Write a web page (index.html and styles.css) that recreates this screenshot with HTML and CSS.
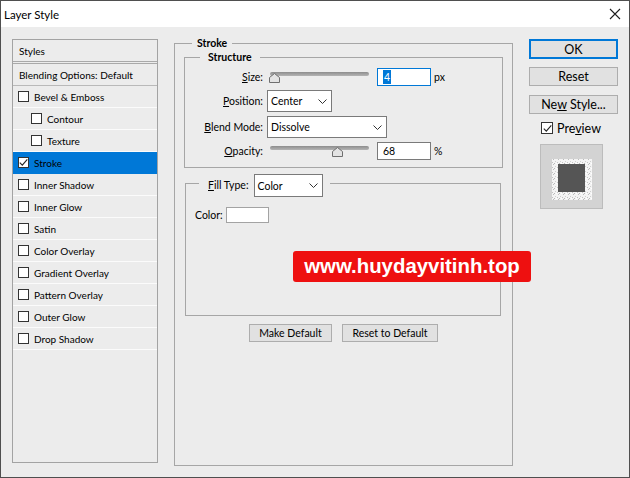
FILE: index.html
```html
<!DOCTYPE html>
<html lang="en">
<head>
<meta charset="utf-8">
<title>Layer Style</title>
<link rel="stylesheet" href="styles.css">
</head>
<body>
<div class="window">
  <div class="titlebar">
    <span class="title">Layer Style</span>
    <svg class="close" width="12" height="12" viewBox="0 0 12 12"><path d="M1 1L11 11M11 1L1 11" stroke="#1e1e1e" stroke-width="1.1" fill="none"/></svg>
  </div>
  <div class="content">
    <div class="styles-panel">
      <div class="row head">Styles</div>
      <div class="row blend">Blending Options: Default</div>
      <div class="row item"><span class="cb"></span>Bevel &amp; Emboss</div>
      <div class="row item sub"><span class="cb"></span>Contour</div>
      <div class="row item sub"><span class="cb"></span>Texture</div>
      <div class="row item selected"><span class="cb checked"><svg width="9" height="9" viewBox="0 0 9 9"><path d="M0.8 4.6L3.3 7.2L8.3 1.3" stroke="#222" stroke-width="1.1" fill="none"/></svg></span>Stroke</div>
      <div class="row item"><span class="cb"></span>Inner Shadow</div>
      <div class="row item"><span class="cb"></span>Inner Glow</div>
      <div class="row item"><span class="cb"></span>Satin</div>
      <div class="row item"><span class="cb"></span>Color Overlay</div>
      <div class="row item"><span class="cb"></span>Gradient Overlay</div>
      <div class="row item"><span class="cb"></span>Pattern Overlay</div>
      <div class="row item"><span class="cb"></span>Outer Glow</div>
      <div class="row item"><span class="cb"></span>Drop Shadow</div>
    </div>

    <fieldset class="group stroke">
      <legend class="legend-stroke">Stroke</legend>
      <fieldset class="group structure">
        <legend class="legend-structure">Structure</legend>
        <div class="form">
          <span class="label"><u>S</u>ize:</span>
          <div class="ctl">
            <div class="slider">
              <div class="track"></div>
              <svg class="thumb" style="left:4.5%" width="11" height="10" viewBox="0 0 11 10"><path d="M5.5 0.5L10.5 4.5V9.5H0.5V4.5Z" fill="#e3e3e3" stroke="#6f6f6f"/></svg>
            </div>
            <div class="input focus"><span class="sel">4</span></div>
            <span class="unit">px</span>
          </div>

          <span class="label"><u>P</u>osition:</span>
          <div class="ctl">
            <div class="select pos"><span>Center</span><svg width="9" height="5" viewBox="0 0 9 5"><path d="M0.5 0.5L4.5 4.5L8.5 0.5" stroke="#333" fill="none"/></svg></div>
          </div>

          <span class="label"><u>B</u>lend Mode:</span>
          <div class="ctl">
            <div class="select mode"><span>Dissolve</span><svg width="9" height="5" viewBox="0 0 9 5"><path d="M0.5 0.5L4.5 4.5L8.5 0.5" stroke="#333" fill="none"/></svg></div>
          </div>

          <span class="label"><u>O</u>pacity:</span>
          <div class="ctl">
            <div class="slider">
              <div class="track"></div>
              <svg class="thumb" style="left:68%" width="11" height="10" viewBox="0 0 11 10"><path d="M5.5 0.5L10.5 4.5V9.5H0.5V4.5Z" fill="#e3e3e3" stroke="#6f6f6f"/></svg>
            </div>
            <div class="input"><span>68</span></div>
            <span class="unit">%</span>
          </div>
        </div>
      </fieldset>

      <fieldset class="group fill">
        <legend class="legend-fill">
          <span class="fill-label"><u>F</u>ill Type:</span>
          <span class="select filltype"><span>Color</span><svg width="9" height="5" viewBox="0 0 9 5"><path d="M0.5 0.5L4.5 4.5L8.5 0.5" stroke="#333" fill="none"/></svg></span>
        </legend>
        <div class="color-row">
          <span>Color:</span>
          <span class="swatch"></span>
        </div>
      </fieldset>

      <div class="defaults">
        <button class="btn small make">Make Default</button>
        <button class="btn small reset-def">Reset to Default</button>
      </div>
    </fieldset>

    <div class="side">
      <button class="btn side-btn ok">OK</button>
      <button class="btn side-btn reset">Reset</button>
      <button class="btn side-btn newstyle">Ne<u>w</u> Style...</button>
      <div class="preview-row">
        <span class="cb checked"><svg width="9" height="9" viewBox="0 0 9 9"><path d="M0.8 4.6L3.3 7.2L8.3 1.3" stroke="#222" stroke-width="1.1" fill="none"/></svg></span>
        <span>Pre<u>v</u>iew</span>
      </div>
      <div class="preview-box">
        <svg width="40" height="41" viewBox="0 0 40 41">
          <defs>
            <pattern id="noise" width="5" height="5" patternUnits="userSpaceOnUse">
              <rect width="5" height="5" fill="#f4f4f4"/>
              <rect x="1" y="0" width="1" height="1" fill="#bdbdbd"/>
              <rect x="3" y="2" width="1" height="1" fill="#d0d0d0"/>
              <rect x="0" y="3" width="1" height="1" fill="#c4c4c4"/>
              <rect x="4" y="4" width="1" height="1" fill="#ffffff"/>
              <rect x="2" y="4" width="1" height="1" fill="#b8b8b8"/>
            </pattern>
          </defs>
          <rect x="0" y="0" width="40" height="41" fill="url(#noise)"/>
          <rect x="6" y="5" width="27" height="28" fill="#555555"/>
        </svg>
      </div>
    </div>
  </div>
  <div class="watermark">www.huydayvitinh.top</div>
</div>
</body>
</html>
```
FILE: styles.css
```css
* { box-sizing: border-box; }
html, body { margin: 0; padding: 0; background: #ececec; }
body {
  font-family: Lato, "Liberation Sans", sans-serif;
  font-size: 10.5px;
  color: #000;
}

.window {
  position: relative;
  width: 630px;
  height: 478px;
  border: 1px solid #4f4f4f;
  background: #ececec;
  overflow: hidden;
}

.titlebar {
  height: 26px;
  background: #fff;
  display: flex;
  align-items: center;
  justify-content: space-between;
  padding: 0 8px 0 3px;
}
.title { font-size: 11.5px; }
.close { display: block; }

.content {
  display: flex;
  align-items: flex-start;
  padding: 0 0 0 11px;
}

/* left styles list */
.styles-panel {
  width: 146px;
  height: 424px;
  margin-top: 12px;
  border: 1px solid #a3a3a3;
  background: #ececec;
  flex: none;
  font-size: 10px;
}
.row {
  height: 22px;
  display: flex;
  align-items: center;
  border-bottom: 1px solid #fbfbfb;
  padding-left: 5px;
  white-space: nowrap;
}
.row.head {
  height: 24px;
  border-bottom: 3px double #a9a9a9;
  padding-left: 6px;
}
.row.blend {
  border-bottom: 1px solid #b9b9b9;
  padding-left: 6px;
}
.row.sub { padding-left: 18px; }
.row.selected { background: #0078d7; border-bottom-color: #0078d7; }

.cb {
  width: 11px;
  height: 11px;
  border: 1px solid #333;
  background: #fff;
  margin-right: 5px;
  flex: none;
  display: flex;
  align-items: center;
  justify-content: center;
}
.cb svg { display: block; }

/* group boxes */
.group {
  margin: 0;
  padding: 0;
  min-width: 0;
  border: 1px solid #a6a6a6;
}
.legend-stroke,
.legend-structure {
  line-height: 14px;
  font-weight: bold;
}

.stroke {
  width: 339px;
  height: 430px;
  margin: 9px 0 0 16px;
  padding: 0 9px;
  flex: none;
}
.legend-stroke { margin-left: 8px; padding: 0 5px; }

.structure { width: 319px; padding: 0; }
.legend-structure { margin-left: 15px; padding: 0 8px; }

.form {
  display: grid;
  grid-template-columns: 78px auto;
  column-gap: 4px;
  row-gap: 4px;
  padding: 4px 0 7px;
  align-items: center;
}
.label { text-align: right; white-space: nowrap; }
.ctl { display: flex; align-items: center; }

.slider {
  position: relative;
  width: 99px;
  height: 18px;
  margin-left: 3px;
}
.track {
  margin-top: 4px;
  height: 4px;
  border-radius: 2px;
  background: linear-gradient(#8d8d8d, #b4b4b4);
}
.thumb {
  position: absolute;
  top: 5px;
  margin-left: -5px;
  display: block;
}

.input {
  width: 54px;
  height: 18px;
  margin-left: 8px;
  border: 1px solid #7a7a7a;
  background: #fff;
  padding-left: 5px;
  display: flex;
  align-items: center;
}
.input.focus { border-color: #0078d7; }
.sel { background: #0078d7; color: #fff; line-height: 14px; padding: 0 1px; }
.unit { margin-left: 3px; }

.select {
  height: 22px;
  border: 1px solid #7a7a7a;
  background: #fff;
  display: flex;
  align-items: center;
  justify-content: space-between;
  padding: 0 4px 0 3px;
}
.select svg { display: block; }
.select.pos { width: 65px; }
.select.mode { width: 120px; }

.fill {
  width: 316px;
  height: 142px;
  margin: 6px 0 0 1px;
  padding: 0 9px;
}
.legend-fill {
  display: flex;
  align-items: flex-start;
  height: 18px;
  margin-left: 4px;
  padding: 0 7px 0 9px;
  font-weight: normal;
}
.fill-label { line-height: 23px; margin-right: 5px; white-space: nowrap; }
.select.filltype { width: 69px; height: 23px; }

.color-row {
  display: flex;
  align-items: center;
  gap: 3px;
  margin-top: 15px;
}
.swatch {
  width: 43px;
  height: 16px;
  border: 1px solid #a3a3a3;
  background: #fff;
}

.defaults {
  display: flex;
  justify-content: center;
  gap: 10px;
  margin-top: 8px;
}

.btn {
  font-family: inherit;
  color: #000;
  background: #e1e1e1;
  border: 1px solid #adadad;
  padding: 0;
  margin: 0;
}
.btn.small { height: 18px; font-size: 10.5px; }
.btn.make { width: 83px; }
.btn.reset-def { width: 96px; }

.side {
  width: 89px;
  margin: 12px 0 0 16px;
  display: flex;
  flex-direction: column;
  font-size: 12.5px;
  flex: none;
}
.side-btn { height: 19px; font-size: 12.5px; margin-top: 9px; }
.side-btn.ok { height: 20px; margin-top: 0; border: 2px solid #0078d7; }
.side-btn.reset { margin-top: 8px; }

.preview-row {
  display: flex;
  align-items: center;
  margin: 8px 0 0 12px;
  height: 12px;
}
.preview-row .cb { width: 12px; height: 12px; margin-right: 4px; }

.preview-box {
  width: 63px;
  height: 65px;
  margin: 10px 0 0 11px;
  background: #d3d3d3;
  border: 1px solid #bcbcbc;
  display: flex;
  justify-content: center;
  padding-top: 14px;
}
.preview-box svg { display: block; }

.watermark {
  position: absolute;
  left: 292px;
  top: 250px;
  width: 238px;
  height: 31px;
  background: #ee1010;
  border-radius: 3px;
  color: #fff;
  font-family: "Liberation Sans", Arial, sans-serif;
  font-weight: bold;
  font-size: 20.4px;
  line-height: 31px;
  text-align: center;
}
```
